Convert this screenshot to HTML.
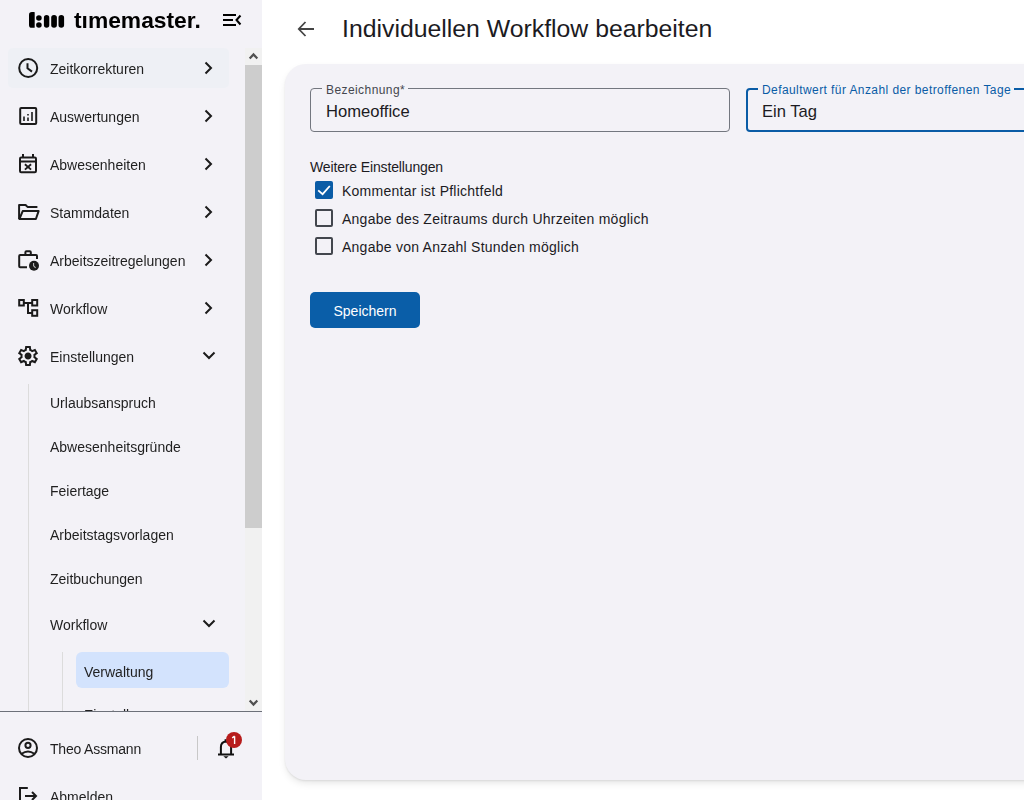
<!DOCTYPE html>
<html><head><meta charset="utf-8">
<style>
html,body{margin:0;padding:0;}
body{width:1024px;height:800px;overflow:hidden;background:#fff;position:relative;font-family:"Liberation Sans",sans-serif;color:#1f1f1f;}
.a{position:absolute;}
.t{position:absolute;white-space:nowrap;font-size:14px;line-height:20px;}
#sb{position:absolute;left:0;top:0;width:262px;height:800px;background:#f3f2f7;overflow:hidden;}
#sb .t{will-change:transform;}
svg{position:absolute;overflow:visible;}
</style></head><body>

<div id="sb">
  <!-- logo -->
  <svg style="left:0;top:0" width="80" height="40" viewBox="0 0 80 40">
    <path d="M31.85 12A2.85 2.85 0 0 0 29 14.85V24.95A2.85 2.85 0 0 0 31.85 27.8H34.2Q34.7 27.8 34.7 27.3V12.5Q34.7 12 34.2 12Z" fill="#000"/>
    <circle cx="38.9" cy="18" r="2.8" fill="#000"/>
    <circle cx="38.9" cy="25" r="2.8" fill="#000"/>
    <rect x="43.9" y="15" width="5.4" height="12.8" rx="2.7" fill="#000"/>
    <rect x="51.2" y="15" width="5.7" height="12.8" rx="2.8" fill="#000"/>
    <rect x="58.5" y="15" width="5.6" height="12.8" rx="2.8" fill="#000"/>
  </svg>
  <div class="t" style="left:74px;top:5.5px;font-size:22.8px;line-height:28px;font-weight:bold;color:#000;">tımemaster.</div>
  <!-- menu open icon -->
  <svg style="left:222px;top:13px" width="20" height="14" viewBox="0 0 20 14">
    <path d="M1 2H14M1 7H11M1 12H14" stroke="#000" stroke-width="2" fill="none"/>
    <path d="M18.5 2.5L14.5 7L18.5 11.5" stroke="#000" stroke-width="2" fill="none"/>
  </svg>

  <!-- scroll area -->
  <div class="a" style="left:0;top:48px;width:245px;height:663px;overflow:hidden;">
    <div class="a" style="left:8px;top:0px;width:221px;height:40px;background:#eef0f5;border-radius:5px;"></div>
  </div>

  <!-- top level items (absolute coords in sidebar) -->
  <!-- clock -->
  <svg style="left:16px;top:56px" width="24" height="24" viewBox="0 0 24 24">
    <circle cx="12.2" cy="12" r="9" stroke="#1b1b1b" stroke-width="2" fill="none"/>
    <path d="M11.5 7.2V12.2L16 15.6" stroke="#1b1b1b" stroke-width="2" fill="none"/>
  </svg>
  <div class="t" style="left:50px;top:59px">Zeitkorrekturen</div>
  <!-- analytics -->
  <svg style="left:16px;top:104px" width="24" height="24" viewBox="0 0 24 24">
    <rect x="4.2" y="4" width="16" height="16" rx="1" stroke="#1b1b1b" stroke-width="2" fill="none"/>
    <path d="M8 12.5V17M12 13.5V17M16 8V17M12 10V11.5" stroke="#1b1b1b" stroke-width="1.6" fill="none"/>
  </svg>
  <div class="t" style="left:50px;top:107px">Auswertungen</div>
  <!-- calendar x -->
  <svg style="left:16px;top:152px" width="24" height="24" viewBox="0 0 24 24">
    <rect x="4" y="5.6" width="16" height="14.6" rx="1.2" stroke="#1b1b1b" stroke-width="2" fill="none"/>
    <path d="M4 9.5H20M7 2V5.6M17 2V5.6" stroke="#1b1b1b" stroke-width="2" fill="none"/>
    <path d="M8.9 12.3L15.1 17.6M15.1 12.3L8.9 17.6" stroke="#1b1b1b" stroke-width="1.9" fill="none"/>
  </svg>
  <div class="t" style="left:50px;top:155px">Abwesenheiten</div>
  <!-- folder open -->
  <svg style="left:16px;top:200px" width="24" height="24" viewBox="0 0 24 24">
    <path d="M3.1 19V5H9.6L11.5 6.9H21.4" stroke="#1b1b1b" stroke-width="2" fill="none" stroke-linejoin="round"/>
    <path d="M3.4 19L6.7 11.1H22.6L19.9 19Z" stroke="#1b1b1b" stroke-width="2" fill="none" stroke-linejoin="round"/>
  </svg>
  <div class="t" style="left:50px;top:203px">Stammdaten</div>
  <!-- work history -->
  <svg style="left:16px;top:248px" width="24" height="24" viewBox="0 0 24 24">
    <path d="M11 19.2H4.2Q3.2 19.2 3.2 18.2V8Q3.2 7 4.2 7H20Q21 7 21 8V11" stroke="#1b1b1b" stroke-width="2" fill="none"/>
    <path d="M9.4 7V4.2Q9.4 3.2 10.4 3.2H13.8Q14.8 3.2 14.8 4.2V7" stroke="#1b1b1b" stroke-width="2" fill="none"/>
    <circle cx="18" cy="17.8" r="5" fill="#1b1b1b"/>
    <path d="M17.6 15V17.8L19.6 19.8" stroke="#bbb" stroke-width="1.1" fill="none"/>
  </svg>
  <div class="t" style="left:50px;top:251px">Arbeitszeitregelungen</div>
  <!-- account tree -->
  <svg style="left:16px;top:296px" width="24" height="24" viewBox="0 0 24 24">
    <rect x="3.2" y="4" width="4.6" height="5.5" stroke="#1b1b1b" stroke-width="2" fill="none"/>
    <rect x="16.2" y="4" width="5" height="5.5" stroke="#1b1b1b" stroke-width="2" fill="none"/>
    <rect x="16.2" y="14.2" width="5" height="5.6" stroke="#1b1b1b" stroke-width="2" fill="none"/>
    <path d="M7.8 7H16.2M12 7V17H16.2" stroke="#1b1b1b" stroke-width="2" fill="none"/>
  </svg>
  <div class="t" style="left:50px;top:299px">Workflow</div>
  <!-- settings gear -->
  <svg style="left:16px;top:344px" width="24" height="24" viewBox="0 0 24 24">
    <path fill="#1b1b1b" d="M9.25 22l-.4-3.2q-.325-.125-.612-.3t-.563-.375L4.7 19.375l-2.75-4.75 2.575-1.95Q4.5 12.5 4.5 12.338v-.675q0-.163.025-.338L1.95 9.375l2.75-4.75 2.975 1.25q.275-.2.575-.375t.6-.3l.4-3.2h5.5l.4 3.2q.325.125.613.3t.562.375l2.975-1.25 2.75 4.75-2.575 1.95q.025.175.025.338v.674q0 .163-.05.338l2.575 1.95-2.75 4.75-2.95-1.25q-.275.2-.575.375t-.6.3l-.4 3.2zm1.75-2h1.975l.35-2.65q.775-.2 1.438-.587t1.212-.938l2.475 1.025.975-1.7-2.15-1.625q.125-.35.175-.737T17.5 12t-.05-.787-.175-.738l2.15-1.625-.975-1.7-2.475 1.05q-.55-.575-1.212-.962t-1.438-.588L13 4h-1.975l-.35 2.65q-.775.2-1.437.588t-1.213.937L5.55 7.15l-.975 1.7 2.15 1.6q-.125.375-.175.75t-.05.8q0 .4.05.775t.175.75l-2.15 1.625.975 1.7 2.475-1.05q.55.575 1.213.963t1.437.587zm1.05-4.5q1.45 0 2.475-1.025T15.55 12t-1.025-2.475T12.05 8.5q-1.475 0-2.487 1.025T8.55 12t1.013 2.475T12.05 15.5z"/>
    <circle cx="12.05" cy="12" r="2.6" fill="#1b1b1b"/>
  </svg>
  <div class="t" style="left:50px;top:347px">Einstellungen</div>

  <!-- chevrons -->
  <svg style="left:196px;top:56px" width="24" height="24" viewBox="0 0 24 24"><path d="M9.5 6.5L15 12L9.5 17.5" stroke="#1b1b1b" stroke-width="2" fill="none"/></svg>
  <svg style="left:196px;top:104px" width="24" height="24" viewBox="0 0 24 24"><path d="M9.5 6.5L15 12L9.5 17.5" stroke="#1b1b1b" stroke-width="2" fill="none"/></svg>
  <svg style="left:196px;top:152px" width="24" height="24" viewBox="0 0 24 24"><path d="M9.5 6.5L15 12L9.5 17.5" stroke="#1b1b1b" stroke-width="2" fill="none"/></svg>
  <svg style="left:196px;top:200px" width="24" height="24" viewBox="0 0 24 24"><path d="M9.5 6.5L15 12L9.5 17.5" stroke="#1b1b1b" stroke-width="2" fill="none"/></svg>
  <svg style="left:196px;top:248px" width="24" height="24" viewBox="0 0 24 24"><path d="M9.5 6.5L15 12L9.5 17.5" stroke="#1b1b1b" stroke-width="2" fill="none"/></svg>
  <svg style="left:196px;top:296px" width="24" height="24" viewBox="0 0 24 24"><path d="M9.5 6.5L15 12L9.5 17.5" stroke="#1b1b1b" stroke-width="2" fill="none"/></svg>
  <svg style="left:197px;top:343px" width="24" height="24" viewBox="0 0 24 24"><path d="M6.5 9.5L12 15L17.5 9.5" stroke="#1b1b1b" stroke-width="2" fill="none"/></svg>

  <!-- sub items -->
  <div class="a" style="left:28px;top:384px;width:1px;height:327px;background:#dcdcdc;"></div>
  <div class="t" style="left:50px;top:393px">Urlaubsanspruch</div>
  <div class="t" style="left:50px;top:437px">Abwesenheitsgründe</div>
  <div class="t" style="left:50px;top:481px">Feiertage</div>
  <div class="t" style="left:50px;top:525px">Arbeitstagsvorlagen</div>
  <div class="t" style="left:50px;top:569px">Zeitbuchungen</div>
  <div class="t" style="left:50px;top:615px">Workflow</div>
  <svg style="left:197px;top:611px" width="24" height="24" viewBox="0 0 24 24"><path d="M6.5 9.5L12 15L17.5 9.5" stroke="#1b1b1b" stroke-width="2" fill="none"/></svg>
  <div class="a" style="left:62px;top:652px;width:1px;height:59px;background:#dcdcdc;"></div>
  <div class="a" style="left:76px;top:652px;width:153px;height:36px;background:#d3e3fd;border-radius:6px;"></div>
  <div class="t" style="left:84px;top:662px">Verwaltung</div>
  <div class="a" style="left:0;top:700px;width:245px;height:11px;overflow:hidden;">
    <div class="t" style="left:84px;top:5.2px">Einstellungen</div>
  </div>

  <!-- scrollbar -->
  <div class="a" style="left:245px;top:48px;width:17px;height:663px;background:#f1f1f1;"></div>
  <div class="a" style="left:245px;top:65px;width:17px;height:463px;background:#cdcdcd;"></div>
  <svg style="left:245px;top:48px" width="17" height="17" viewBox="0 0 17 17"><path d="M4.7 10.6L8.5 6.4L12.3 10.6" stroke="#505050" stroke-width="2.2" fill="none"/></svg>
  <svg style="left:245px;top:694px" width="17" height="17" viewBox="0 0 17 17"><path d="M4.7 6.4L8.5 10.6L12.3 6.4" stroke="#505050" stroke-width="2.2" fill="none"/></svg>

  <!-- divider -->
  <div class="a" style="left:0;top:711px;width:262px;height:1px;background:#6c7079;"></div>

  <!-- user -->
  <svg style="left:16px;top:736px" width="24" height="24" viewBox="0 0 24 24">
    <circle cx="12" cy="12" r="9" stroke="#1b1b1b" stroke-width="2" fill="none"/>
    <circle cx="12" cy="9.3" r="2.6" stroke="#1b1b1b" stroke-width="2" fill="none"/>
    <path d="M5.6 17.8Q12 13 18.4 17.8" stroke="#1b1b1b" stroke-width="2" fill="none"/>
  </svg>
  <div class="t" style="left:50px;top:739px;letter-spacing:-0.2px">Theo Assmann</div>
  <div class="a" style="left:197px;top:736px;width:1px;height:24px;background:#c8c8c8;"></div>
  <!-- bell -->
  <svg style="left:214px;top:735.5px" width="24" height="24" viewBox="0 0 24 24">
    <path d="M4 18.6H20M6.9 18.6V11Q6.9 6.2 11.6 5.4Q17.1 6.2 17.1 11V18.6" stroke="#111" stroke-width="2" fill="none"/>
    <path d="M11.6 5.6V3.2" stroke="#111" stroke-width="2" fill="none"/>
    <path d="M9.4 20.2H14.6L12 22.6Z" fill="#111"/>
  </svg>
  <div class="a" style="left:226px;top:732px;width:16px;height:16px;border-radius:8px;background:#b71c1c;"></div>
  <svg style="left:226px;top:732px" width="16" height="16" viewBox="0 0 16 16"><path d="M8.6 4.2V12M8.6 4.2L6.2 5.8" stroke="#fff" stroke-width="1.4" fill="none"/></svg>
  <!-- logout -->
  <svg style="left:16px;top:784px" width="24" height="24" viewBox="0 0 24 24">
    <path d="M11.8 4H4V20H11.8" stroke="#1b1b1b" stroke-width="2" fill="none"/>
    <path d="M9 12H20M16 8L20 12L16 16" stroke="#1b1b1b" stroke-width="2" fill="none"/>
  </svg>
  <div class="t" style="left:50px;top:787px">Abmelden</div>
</div>

<!-- main -->
<svg style="left:294px;top:17px" width="24" height="24" viewBox="0 0 24 24">
  <path d="M20 12H5M11.5 5L4.8 12L11.5 19" stroke="#444" stroke-width="1.8" fill="none"/>
</svg>
<div class="t" style="left:342px;top:14px;font-size:24.8px;line-height:30px;color:#1c1b1f;">Individuellen Workflow bearbeiten</div>

<div class="a" style="left:285px;top:64px;width:800px;height:716px;background:#f3f2f7;border-radius:21px;box-shadow:0 1px 2px rgba(0,0,0,0.07),0 4px 9px -2px rgba(0,0,0,0.13);"></div>

<!-- field 1 -->
<div class="a" style="left:310px;top:88px;width:418px;height:42px;border:1px solid #73777f;border-radius:4px;"></div>
<div class="a" style="left:322px;top:84px;width:86px;height:8px;background:#f3f2f7;"></div>
<div class="t" style="left:326px;top:82px;font-size:12px;letter-spacing:0.42px;line-height:16px;color:#44474e;">Bezeichnung*</div>
<div class="t" style="left:326px;top:101px;font-size:16.6px;line-height:22px;color:#1c1b1f;">Homeoffice</div>

<!-- field 2 -->
<div class="a" style="left:746px;top:88px;width:416px;height:40px;border:2px solid #0a5ca6;border-radius:4px;"></div>
<div class="a" style="left:758px;top:84px;width:256px;height:8px;background:#f3f2f7;"></div>
<div class="t" style="left:762px;top:82px;font-size:12px;letter-spacing:0.42px;line-height:16px;color:#0a5ca6;">Defaultwert für Anzahl der betroffenen Tage</div>
<div class="t" style="left:762px;top:101px;font-size:16.6px;line-height:22px;color:#1c1b1f;">Ein Tag</div>

<div class="t" style="left:310px;top:157px;color:#1c1b1f;letter-spacing:-0.14px;">Weitere Einstellungen</div>

<!-- checkboxes -->
<div class="a" style="left:315px;top:181px;width:18px;height:18px;background:#0a5ca6;border-radius:2px;"></div>
<svg style="left:315px;top:181px" width="18" height="18" viewBox="0 0 18 18"><path d="M3.2 9.3L7.6 13.2L14.8 5" stroke="#fff" stroke-width="1.8" fill="none"/></svg>
<div class="t" style="left:342px;top:181px;color:#1c1b1f;letter-spacing:0.25px;">Kommentar ist Pflichtfeld</div>

<div class="a" style="left:315px;top:209px;width:14px;height:14px;border:2px solid #43474e;border-radius:2px;"></div>
<div class="t" style="left:342px;top:209px;color:#1c1b1f;letter-spacing:0.25px;">Angabe des Zeitraums durch Uhrzeiten möglich</div>

<div class="a" style="left:315px;top:237px;width:14px;height:14px;border:2px solid #43474e;border-radius:2px;"></div>
<div class="t" style="left:342px;top:237px;color:#1c1b1f;letter-spacing:0.25px;">Angabe von Anzahl Stunden möglich</div>

<!-- button -->
<div class="a" style="left:310px;top:292px;width:110px;height:36px;background:#0a5ea8;border-radius:5px;"></div>
<div class="t" style="left:310px;top:301px;width:110px;text-align:center;color:#fff;">Speichern</div>

</body></html>
